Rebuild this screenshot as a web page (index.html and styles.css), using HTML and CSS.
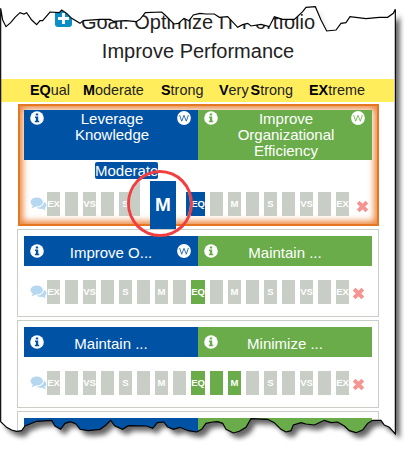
FILE: index.html
```html
<!DOCTYPE html>
<html lang="en">
<head>
<meta charset="utf-8">
<title>Pairwise comparison</title>
<link rel="stylesheet" href="styles.css">
</head>
<body>
<svg class="defs" width="0" height="0" aria-hidden="true">
  <symbol id="info" viewBox="0 0 14 14"><circle cx="7" cy="7" r="6.8" fill="#fff"/><path d="M5.8 2.500h2.400v2H5.800zM5 5.600h3.200v4.200h1v1.400H4.900V9.800h1V7H5z" fill="currentColor"/></symbol>
  <symbol id="w" viewBox="0 0 14 14"><circle cx="7" cy="7" r="6.900" fill="#fff"/><path d="M2.600 4l2.100 6.200L7 4.300l2.300 5.900L11.400 4" fill="none" stroke="currentColor" stroke-width=".8"/></symbol>
  <symbol id="chat" viewBox="0 0 16 14"><ellipse cx="6.200" cy="5" rx="6.200" ry="4.600"/><path d="M2.500 8L1 11.500 6 9zM13.300 4.500C17 7 16.300 9.800 14 11l1.600 2.400-4-1.600C9 12.200 7 11.500 6 10.600 10.500 10.500 13.800 8 13.300 4.500z"/></symbol>
  <symbol id="x" viewBox="0 0 12 12"><path d="M2 2l8 8M10 2l-8 8" stroke="currentColor" stroke-width="3.600"/></symbol>
</svg>
<main class="page">
  <h1 class="title"><svg class="plus" viewBox="0 0 17 17"><rect width="17" height="17" rx="3" fill="#0b8ec4"/><path d="M8.500 3v11M3 8.500h11" stroke="#fff" stroke-width="3"/></svg><span class="line">Goal: Optimize IT Portfolio</span><span class="line">Improve Performance</span></h1>
  <div class="legend"><span><b>EQ</b>ual</span><span><b>M</b>oderate</span><span><b>S</b>trong</span><span><b>V</b>ery<b class="gap">S</b>trong</span><span><b>EX</b>treme</span></div>
  <section class="card active">
    <div class="head"><div class="side blue"><svg class="info"><use href="#info"/></svg><span>Leverage<br>Knowledge</span><svg class="w"><use href="#w"/></svg></div><div class="side green"><svg class="info"><use href="#info"/></svg><span>Improve<br>Organizational<br>Efficiency</span><svg class="w"><use href="#w"/></svg></div></div>
    <div class="value"><span>Moderate</span></div>
    <div class="scale"><svg class="chat"><use href="#chat"/></svg><i>EX</i><i></i><i>VS</i><i></i><i>S</i><i class="clear"></i><i class="clear"></i><i class="clear"></i><i class="eq b">EQ</i><i></i><i>M</i><i></i><i>S</i><i></i><i>VS</i><i></i><i>EX</i><svg class="x"><use href="#x"/></svg></div>
    <div class="lens"><span class="near"></span><span class="zoomed">M</span><span class="far"></span></div>
  </section>
  <section class="card">
    <div class="head"><div class="side blue"><svg class="info"><use href="#info"/></svg><span>Improve O...</span><svg class="w"><use href="#w"/></svg></div><div class="side green"><svg class="info"><use href="#info"/></svg><span>Maintain ...</span></div></div>
    <div class="scale"><svg class="chat"><use href="#chat"/></svg><i>EX</i><i></i><i>VS</i><i></i><i>S</i><i></i><i>M</i><i></i><i class="eq g">EQ</i><i></i><i>M</i><i></i><i>S</i><i></i><i>VS</i><i></i><i>EX</i><svg class="x"><use href="#x"/></svg></div>
  </section>
  <section class="card">
    <div class="head"><div class="side blue"><svg class="info"><use href="#info"/></svg><span>Maintain ...</span></div><div class="side green"><svg class="info"><use href="#info"/></svg><span>Minimize ...</span></div></div>
    <div class="scale"><svg class="chat"><use href="#chat"/></svg><i>EX</i><i></i><i>VS</i><i></i><i>S</i><i></i><i>M</i><i></i><i class="eq g">EQ</i><i class="g"></i><i class="g">M</i><i></i><i>S</i><i></i><i>VS</i><i></i><i>EX</i><svg class="x"><use href="#x"/></svg></div>
  </section>
  <section class="card">
    <div class="head"><div class="side blue"></div><div class="side green"></div></div>
  </section>
</main>
<svg class="torn" viewBox="0 0 1236 1380">
  <defs>
    <path id="paper" d="M2 25L8 60 18 80 32 68 45 52 60 38 72 42 80 38 95 60 110 74 120 62 128 62 150 36 178 38 185 30 200 40 215 55 240 70 250 62 300 58 330 58 340 64 378 62 408 65 420 58 436 38 485 36 495 45 510 60 522 72 535 70 552 55 567 62 580 45 600 40 618 42 643 42 658 52 683 50 713 82 728 74 743 70 753 78 783 73 808 80 823 50 848 58 883 58 908 35 918 22 946 20 963 60 980 93 1008 90 1023 70 1038 68 1050 50 1098 56 1138 52 1163 52 1180 40 1186 28V1302L1168 1282 1153 1275 1143 1261 1118 1261 1103 1270 1088 1290 1068 1298 1048 1292 1033 1278 1013 1266 993 1268 973 1261 943 1275 918 1272 903 1268 880 1275 873 1292 858 1296 843 1288 823 1268 803 1258 753 1256 738 1282 718 1294 700 1299 678 1288 668 1270 653 1265 638 1266 618 1270 605 1288 590 1296 565 1292 540 1282 520 1288 502 1280 492 1266 472 1268 458 1285 440 1278 385 1277 368 1288 345 1278 332 1261 318 1275 300 1288 265 1292 240 1288 228 1272 212 1265 195 1270 182 1288 165 1278 155 1261 110 1264 75 1278 65 1292 50 1294 35 1290 20 1282 2 1265Z"/>
    <mask id="outside" maskUnits="userSpaceOnUse" x="0" y="0" width="1236" height="1380"><rect width="1236" height="1380" fill="#fff"/><use href="#paper" fill="#000"/></mask>
    <filter id="soft" filterUnits="userSpaceOnUse" x="-50" y="-50" width="1340" height="1480"><feGaussianBlur stdDeviation="8"/></filter>
  </defs>
  <g mask="url(#outside)"><rect width="1236" height="1380" fill="#fff"/><use href="#paper" x="14" y="16" fill="#000" opacity=".6" filter="url(#soft)"/><path d="M0 0H1183V100H0z" fill="#fff" opacity=".85"/></g>
  <use href="#paper" fill="none" stroke="#000" stroke-width="3.500"/>
</svg>
</body>
</html>
```
FILE: styles.css
```css
* { box-sizing: border-box; }
body { margin: 0; width: 412px; height: 460px; overflow: hidden; background: #fff; font-family: "Liberation Sans", Arial, sans-serif; }
.defs { position: absolute; }
.page { width: 396px; height: 460px; overflow: hidden; }
.title { margin: 0; padding-top: 8px; height: 79px; text-align: center; font-size: 20px; font-weight: 400; line-height: 29px; color: #222; position: relative; }
.title .line { display: block; }
.plus { position: absolute; left: 55px; top: 10px; width: 17px; height: 17px; }
.legend { display: grid; grid-template-columns: 53px 78px 58px 90px auto; width: 394px; height: 23px; padding-left: 30px; background: #ffed5c; font-size: 14.4px; line-height: 22px; color: #222; white-space: nowrap; }
.legend b { color: #000; }
.gap { margin-left: 2px; }
.card { position: relative; width: 362px; height: 88px; margin: 0 0 3px 17px; padding: 6px; border: 1px solid #c8cec6; background: #fff; }
.card.active { width: 361px; height: 122px; margin: 2px 0 3px 18px; border: 0; box-shadow: inset 0 0 0 2px #e57722, inset 0 0 6px 5px #ec8a45; }
.head { display: flex; height: 30px; }
.active .head { height: 50px; }
.side { position: relative; width: 174px; text-align: center; color: #fff; font-size: 15px; line-height: 33px; }
.active .side { line-height: 16px; padding-top: 1px; padding-left: 2px; }
.blue { background: #0052a5; }
.green { background: #6aac4a; }
.info, .w { position: absolute; width: 14px; height: 14px; top: 8px; }
.info { left: 6px; }
.w { right: 7px; }
.active .info, .active .w { top: 1px; }
.blue svg { color: #0052a5; }
.green svg { color: #6aac4a; }
.value { height: 32px; padding-top: 2px; padding-left: 71px; font-size: 15px; line-height: 17px; }
.value span { display: inline-block; background: #0052a5; color: #fff; border-radius: 2px; }
.scale { display: flex; gap: 5px; height: 24px; margin-top: 14px; padding-left: 6px; }
.active .scale { margin-top: 0; }
.scale i { flex: none; width: 13px; height: 24px; background: #c8cec6; color: #fff; font: bold 9.5px/24px "Liberation Sans", Arial, sans-serif; display: flex; justify-content: center; overflow: hidden; }
.scale .eq { width: 14px; }
.scale .b { background: #0052a5; }
.scale .g { background: #6aac4a; }
.scale .clear { background: none; }
.chat { flex: none; width: 17px; height: 14px; margin: 5px -5px 0 0; fill: #b5d7f0; }
.x { flex: none; width: 13px; height: 13px; margin: 7px 0 0 -2px; color: #f59490; }
.active .x { margin: 8px 0 0 2px; }
.lens { position: absolute; z-index: 2; left: 109px; top: 66px; width: 66px; height: 67px; border: 3px solid #f23e40; border-radius: 50%; overflow: hidden; display: flex; gap: 10px; padding-top: 8px; }
.lens span { flex: none; height: 48px; }
.near { width: 10px; background: linear-gradient(#c8cec6, #c8cec6) 0 0 / 100% 35px no-repeat; }
.zoomed { width: 26px; background: #0052a5; color: #fff; font-weight: bold; font-size: 19px; line-height: 48px; text-align: center; }
.far { width: 12px; background: linear-gradient(#0052a5, #0052a5) 0 11px / 100% 24px no-repeat; }
.torn { position: absolute; left: 0; top: 0; width: 412px; height: 460px; z-index: 5; }
```
